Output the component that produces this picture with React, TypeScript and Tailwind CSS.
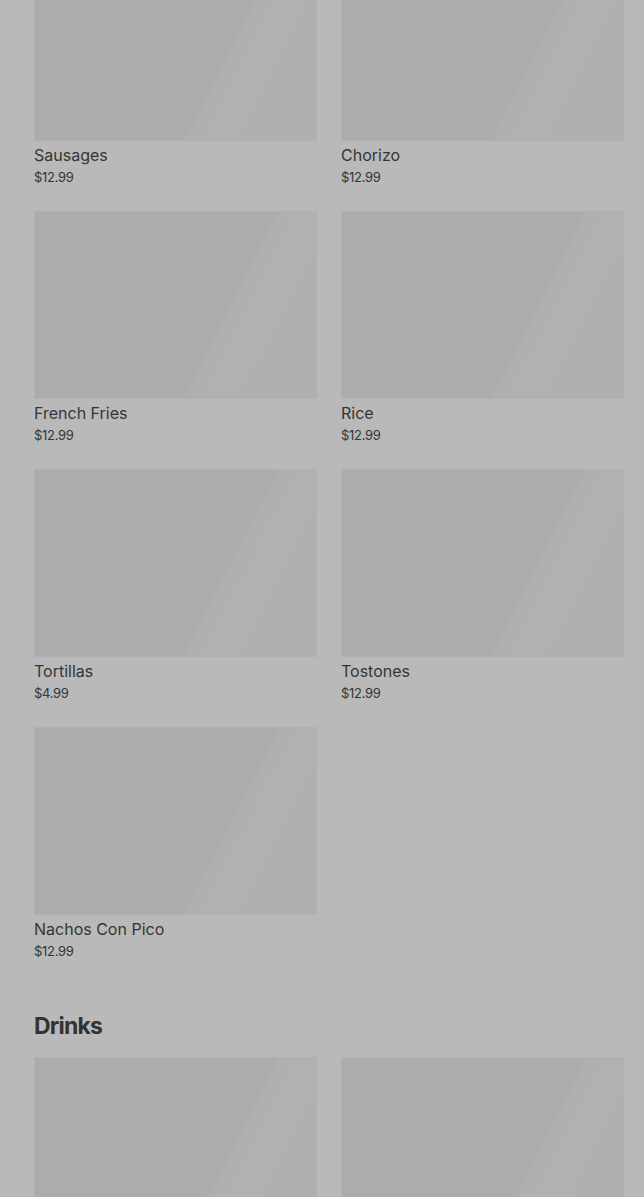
import React from "react";

const items = [
  { name: "Sausages", price: "$12.99" },
  { name: "Chorizo", price: "$12.99" },
  { name: "French Fries", price: "$12.99" },
  { name: "Rice", price: "$12.99" },
  { name: "Tortillas", price: "$4.99" },
  { name: "Tostones", price: "$12.99" },
  { name: "Nachos Con Pico", price: "$12.99" },
];

function Card({ name, price }: { name?: string; price?: string }) {
  return (
    <div className="flex flex-col">
      <div className="h-[188px] w-full border border-[#b0b0b0] bg-[linear-gradient(117deg,#acacac_0%,#acacac_64%,#b0b0b0_66%,#b1b1b1_78%,#afafaf_82%,#afafaf_100%)]" />
      {name && (
        <div className="pt-[2px]">
          <div className="text-[16px] leading-[24px] text-[#353535]">{name}</div>
          <div className="text-[13px] leading-[20px] tracking-[-0.3px] text-[#353535]">{price}</div>
        </div>
      )}
    </div>
  );
}

export default function App() {
  return (
    <div
      className="min-h-[1197px] w-full overflow-hidden bg-[#b9b9b9] pl-[34px] pr-[20px]"
      style={{ fontFamily: "Inter, 'Noto Sans', sans-serif" }}
    >
      <div className="-mt-[47px] grid grid-cols-2 gap-x-[24px] gap-y-[24px]">
        {items.map((it) => (
          <Card key={it.name} name={it.name} price={it.price} />
        ))}
      </div>
      <h2 className="mt-[48px] mb-[14px] text-[23px] font-bold leading-[34px] tracking-[-0.8px] text-[#333333]">
        Drinks
      </h2>
      <div className="grid grid-cols-2 gap-x-[24px]">
        <Card />
        <Card />
      </div>
    </div>
  );
}
